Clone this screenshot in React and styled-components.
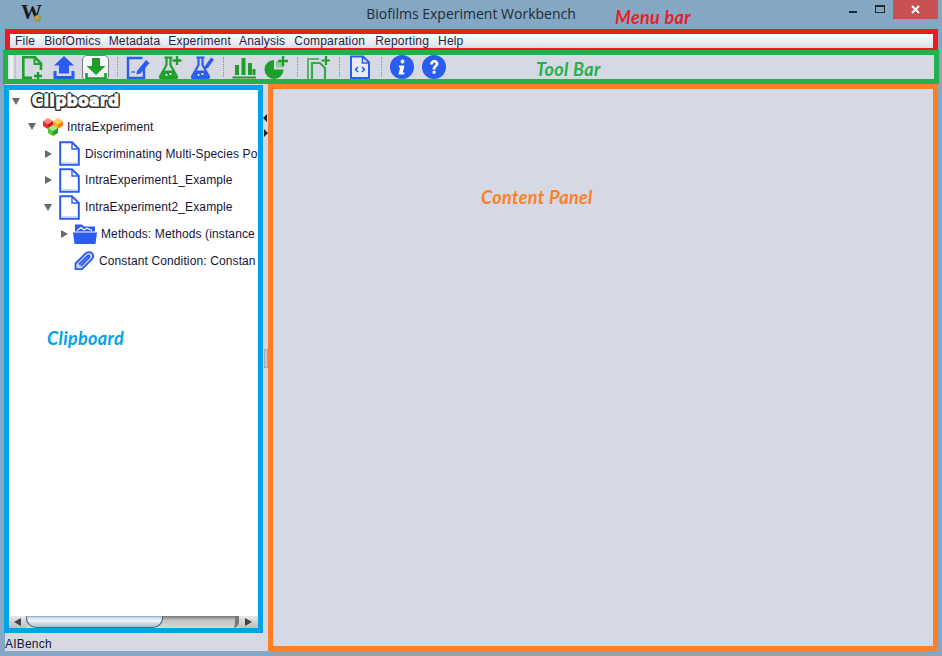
import React from 'react'
import styled, { createGlobalStyle } from 'styled-components'

const BLUE = '#2b5cf0'
const GREEN = '#1f9e2c'

const GlobalStyle = createGlobalStyle`
html, body {
  margin: 0;
  padding: 0;
  background: #84a8c3;
}
* {
  box-sizing: border-box;
}
`

const Window = styled.div`
position: relative;
width: 942px;
height: 656px;
display: flex;
flex-direction: column;
background: #84a8c3;
font-family: "Liberation Sans", Arial, sans-serif;
overflow: hidden;
`

const TitleBar = styled.div`
position: relative;
height: 29px;
flex: none;
display: flex;
justify-content: space-between;
align-items: flex-start;
padding: 0 4px 0 21px;
`

const AppLogo = styled.div`
position: relative;
width: 20px;
height: 20px;
margin-top: 2px;
font-family: "Liberation Serif", serif;
font-weight: bold;
font-size: 21px;
line-height: 20px;
color: #1c1c1c;
`

const LogoDot = styled.span`
position: absolute;
right: 0;
bottom: 0;
width: 7px;
height: 7px;
border-radius: 50%;
background: radial-gradient(circle at 40% 40%, #f0a040, #6f9a5a 75%);
`

const Title = styled.div`
position: absolute;
left: 0;
right: 0;
top: 5px;
text-align: center;
font-family: "Open Sans", sans-serif;
font-size: 14px;
line-height: 18px;
color: #1e2a36;
`

const WindowButtons = styled.div`
position: relative;
display: flex;
align-items: flex-start;
`

const MinButton = styled.div`
width: 8px;
height: 2px;
margin: 11px 18px 0 0;
background: #1f2a33;
`

const MaxButton = styled.div`
width: 10px;
height: 8px;
margin: 5px 8px 0 0;
border: 1px solid #1f2a33;
border-top-width: 2px;
`

const CloseButton = styled.div`
width: 45px;
height: 19px;
background: #c75050;
display: flex;
align-items: center;
justify-content: center;
`

const Frame = styled.div`
flex: 1;
min-height: 0;
margin: 0 4px 5px 5px;
display: flex;
flex-direction: column;
background: #d6d9e3;
`

const MenuBar = styled.div`
height: 21px;
flex: none;
display: flex;
align-items: center;
border: solid #ed1c24;
border-width: 5px 5px 2px 5px;
padding-left: 5px;
background: linear-gradient(#ffffff, #dcdee6);
`

const MenuItem = styled.span`
font-size: 12px;
line-height: 14px;
letter-spacing: 0.2px;
margin-right: ${props => props.gap}px;
color: #23234a;
`

const ToolBar = styled.div`
position: relative;
height: 34px;
flex: none;
margin: 0 -1px 0 -2px;
display: flex;
align-items: stretch;
border: 5px solid #22b14c;
overflow: hidden;
`

const Gripper = styled.div`
width: 8px;
background: linear-gradient(90deg, #d6d9e3, #f4f5f8 45%, #b9bdc9);
`

const ToolButton = styled.div`
width: 32px;
height: 24px;
display: flex;
justify-content: center;
`

const PressedButton = styled.div`
width: 27px;
height: 26px;
margin: 0 3px 0 2px;
display: flex;
justify-content: center;
border: 1px solid #7a7d88;
border-radius: 5px;
background: linear-gradient(#ffffff, #e9ebf0);
`

const ToolSep = styled.div`
width: 10px;
position: relative;
&::after {
  content: "";
  position: absolute;
  left: 5px;
  top: 2px;
  bottom: 2px;
  border-left: 1px dotted #8a8d98;
}
`

const Main = styled.div`
flex: 1;
min-height: 0;
display: flex;
`

const LeftColumn = styled.div`
width: 259px;
margin-left: -1px;
flex: none;
display: flex;
flex-direction: column;
`

const ClipboardPanel = styled.div`
position: relative;
flex: 1;
min-height: 0;
margin-top: 1px;
display: flex;
flex-direction: column;
border: 5px solid #00a2e8;
background: #ffffff;
`

const Tree = styled.div`
flex: 1;
min-height: 0;
overflow: hidden;
`

const HeadRow = styled.div`
height: 23.5px;
display: flex;
align-items: center;
padding-left: 3px;
`

const HeadText = styled.span`
margin: -2px 0 0 12px;
font-family: "DejaVu Sans", sans-serif;
font-weight: bold;
font-size: 15px;
letter-spacing: 0.7px;
color: #ffffff;
-webkit-text-stroke: 1px #ffffff;
text-shadow: 2px 0 0 #333, -2px 0 0 #333, 0 2px 0 #333, 0 -2px 0 #333, 1.5px 1.5px 0 #333, -1.5px 1.5px 0 #333, 1.5px -1.5px 0 #333, -1.5px -1.5px 0 #333;
`

const Row = styled.div`
height: 26.8px;
display: flex;
align-items: center;
padding-left: ${props => props.indent}px;
white-space: nowrap;
font-size: 12px;
letter-spacing: 0.12px;
color: #14143a;
`

const ArrowDown = styled.span`
flex: none;
width: 0;
height: 0;
border-style: solid;
border-width: 7px 4.5px 0 4.5px;
border-color: #6a6a6a transparent transparent transparent;
`

const ArrowRight = styled.span`
flex: none;
width: 0;
height: 0;
margin-left: 1px;
border-style: solid;
border-width: 4.5px 0 4.5px 7px;
border-color: transparent transparent transparent #6a6a6a;
`

const ArrowSlot = styled.span`
flex: none;
width: ${props => props.width}px;
display: flex;
`

const IconSlot = styled.span`
flex: none;
display: flex;
margin-right: ${props => props.gap}px;
`

const HScroll = styled.div`
height: 12px;
flex: none;
display: flex;
background: linear-gradient(#77777a, #c4c4c7 35%, #d8d8da);
`

const ScrollButton = styled.div`
width: ${props => props.width}px;
flex: none;
display: flex;
align-items: center;
justify-content: center;
background: linear-gradient(#e8e8ea, #bdbdc1);
`

const ArrowSmallLeft = styled.span`
width: 0;
height: 0;
border-style: solid;
border-width: 4px 7px 4px 0;
border-color: transparent #444 transparent transparent;
`

const ArrowSmallRight = styled.span`
width: 0;
height: 0;
border-style: solid;
border-width: 4px 0 4px 7px;
border-color: transparent transparent transparent #444;
`

const ScrollThumb = styled.div`
width: 137px;
flex: none;
border: 1px solid #4a6078;
border-top-color: #9fb2c4;
border-radius: 0 0 10px 10px;
background: linear-gradient(#c2d3e2, #eef4f9 35%, #a9bfd3);
`

const ScrollTrack = styled.div`
flex: 1;
border-right: 4px solid #77777a;
border-radius: 0 0 6px 0;
`

const StatusBar = styled.div`
height: 18px;
flex: none;
padding-left: 1px;
font-size: 12px;
letter-spacing: 0.2px;
line-height: 22px;
color: #14143a;
`

const Splitter = styled.div`
position: relative;
width: 5px;
flex: none;
display: flex;
flex-direction: column;
align-items: center;
padding-top: 265px;
`

const SplitHandle = styled.div`
width: 4px;
height: 19px;
border: 1px solid #a4a8b4;
background: #c3c7d1;
`

const SplitArrowLeft = styled.span`
position: absolute;
left: 0;
top: 30px;
width: 0;
height: 0;
border-style: solid;
border-width: 4px 4px 4px 0;
border-color: transparent #222 transparent transparent;
`

const SplitArrowRight = styled.span`
position: absolute;
left: 1px;
top: 45px;
width: 0;
height: 0;
border-style: solid;
border-width: 4px 0 4px 4px;
border-color: transparent transparent transparent #222;
`

const ContentPanel = styled.div`
position: relative;
flex: 1;
border: 5px solid #ff7f27;
background: #d6d9e3;
`

const Note = styled.div`
position: absolute;
font-family: Lato, sans-serif;
font-style: italic;
font-weight: bold;
font-size: 18px;
letter-spacing: 0.35px;
line-height: 22px;
white-space: nowrap;
color: ${props => props.color};
`

const MenuNote = styled(Note)`
left: 615px;
top: 6px;
`

const ToolNote = styled(Note)`
left: 528px;
top: 3px;
`

const ClipNote = styled(Note)`
left: 38px;
top: 237px;
`

const ContentNote = styled(Note)`
left: 208px;
top: 97px;
`

const Ico = ({ w = 24, h = 24, vb, children }) => (
  <svg width={w} height={h} viewBox={vb || `0 0 ${w} ${h}`} fill="none">{children}</svg>
)

const DocPlusIcon = () => (
  <Ico>
    <path d="M12 22.7H3.3V2.3H15L21 8.5V15" stroke={GREEN} strokeWidth="2.6" />
    <path d="M14.5 2.5V9H20.5" stroke={GREEN} strokeWidth="2" />
    <path d="M18 17V24M14 21H22" stroke={GREEN} strokeWidth="2.4" />
  </Ico>
)

const UploadIcon = () => (
  <Ico>
    <path d="M12 1L22 10.5H17V18.5H7V10.5H2Z" fill={BLUE} />
    <path d="M3 16V22.5H21V16" stroke={BLUE} strokeWidth="3" />
  </Ico>
)

const DownloadIcon = () => (
  <Ico>
    <path d="M8 2H16V10H21.5L12 19L2.5 10H8Z" fill={GREEN} />
    <path d="M2.5 17V22.5H21.5V17" stroke={GREEN} strokeWidth="2.6" />
  </Ico>
)

const DocEditIcon = () => (
  <Ico>
    <path d="M16.5 3H2V23H18V12" stroke={BLUE} strokeWidth="2.4" />
    <path d="M11 16L20 5L23.5 8L14.5 18.5L10.5 19.5Z" fill={BLUE} />
    <path d="M5.5 17H9" stroke={BLUE} strokeWidth="1.4" />
  </Ico>
)

const FlaskShape = ({ color }) => (
  <g>
    <path d="M6.5 2.5H14.5M8.5 3V10L2 21.5Q2 23.5 4 23.5H17Q19 23.5 19 21.5L12.5 10V3" stroke={color} strokeWidth="2.2" />
    <path d="M6 15.5H15L18.5 23H2.5Z" fill={color} />
    <circle cx="8.5" cy="20" r="1.1" fill="#ffffff" />
    <circle cx="12.5" cy="19" r="1.1" fill="#ffffff" />
  </g>
)

const FlaskPlusIcon = () => (
  <Ico>
    <FlaskShape color={GREEN} />
    <path d="M19 1V10M14.5 5.5H23.5" stroke={GREEN} strokeWidth="2.4" />
  </Ico>
)

const FlaskEditIcon = () => (
  <Ico>
    <FlaskShape color={BLUE} />
    <path d="M15 11L21 2.5L24 4.5L18 13L15 14Z" fill={BLUE} />
  </Ico>
)

const ChartIcon = () => (
  <Ico>
    <path d="M3 10H7V20H3ZM9.5 3H13.5V20H9.5ZM16 8H20V20H16ZM20.5 14H23.5V20H20.5Z" fill={GREEN} />
    <path d="M0.5 22.5H24" stroke={GREEN} strokeWidth="2" />
  </Ico>
)

const PieIcon = () => (
  <Ico>
    <path d="M10 5A9.5 9.5 0 1 0 19.5 14.5H10Z" fill={GREEN} />
    <path d="M12 6A8.5 8.5 0 0 1 20.5 12.5H12Z" fill="#8ec99a" />
    <path d="M19 1V11M14 6H24" stroke={GREEN} strokeWidth="2.4" />
  </Ico>
)

const DocsPlusIcon = () => (
  <Ico>
    <path d="M2 24V4H13" stroke="#58b566" strokeWidth="2" />
    <path d="M6 24V8H14L19 13V24" stroke="#3ca84c" strokeWidth="2.2" />
    <path d="M20 1V10M15.5 5.5H24" stroke={GREEN} strokeWidth="2.2" />
  </Ico>
)

const CodeDocIcon = () => (
  <Ico>
    <path d="M3 23V1.5H15L21 7.5V23Z" stroke={BLUE} strokeWidth="2" fill="#e8ebf5" />
    <path d="M14.5 2V8H21" stroke={BLUE} strokeWidth="1.6" />
    <path d="M10 12L7.5 14.5L10 17M14 12L16.5 14.5L14 17" stroke={BLUE} strokeWidth="1.5" />
  </Ico>
)

const CircleBadge = ({ children }) => (
  <svg width="24" height="24" viewBox="0 0 24 24">
    <circle cx="12" cy="12" r="12" fill={BLUE} />
    {children}
  </svg>
)

const InfoIcon = () => (
  <CircleBadge>
    <path d="M12.5 4.5a2 2 0 1 1 0 4a2 2 0 0 1 0-4ZM9 10.5H14.5L12.8 17.5H14.5L14 19.5H8.5L10.2 12.5H8.6Z" fill="#ffffff" />
  </CircleBadge>
)

const HelpIcon = () => (
  <CircleBadge>
    <path d="M8 9.5C8 6.5 10 5 12.2 5C14.6 5 16.5 6.5 16.5 8.8C16.5 11.6 13.4 11.8 13.4 14.5H10.6C10.6 10.8 13.4 10.6 13.4 8.9C13.4 8 12.9 7.5 12.1 7.5C11.2 7.5 10.9 8.2 10.8 9.5Z" fill="#ffffff" />
    <rect x="10.6" y="15.8" width="2.9" height="2.9" rx="0.6" fill="#ffffff" />
  </CircleBadge>
)

const CubesIcon = () => (
  <svg width="22" height="18" viewBox="0 0 22 18">
    <path d="M6 0L11 3L6 6L1 3Z" fill="#ff8a78" />
    <path d="M1 3L6 6V11L1 8Z" fill="#f02a30" />
    <path d="M11 3L6 6V11L11 8Z" fill="#c81820" />
    <path d="M16 0L21 3L16 6L11 3Z" fill="#ffd060" />
    <path d="M11 3L16 6V11L11 8Z" fill="#ffa820" />
    <path d="M21 3L16 6V11L21 8Z" fill="#e88a10" />
    <path d="M11 7L16 10L11 13L6 10Z" fill="#a0ec80" />
    <path d="M6 10L11 13V18L6 15Z" fill="#50c838" />
    <path d="M16 10L11 13V18L16 15Z" fill="#28a028" />
  </svg>
)

const TreeDocIcon = () => (
  <svg width="21" height="25" viewBox="0 0 21 25" fill="none">
    <path d="M1.2 23.8V1.2H13L19.8 8V23.8Z" fill="#ffffff" stroke={BLUE} strokeWidth="2" />
    <path d="M13 1.5V8H19.5" stroke={BLUE} strokeWidth="1.4" />
    <path d="M3 21.8H18" stroke="#b8c8fa" strokeWidth="1" />
  </svg>
)

const FolderIcon = () => (
  <svg width="24" height="20" viewBox="0 0 24 20">
    <path d="M2 7.5V0.5H9L11 2.5H22V7.5Z" fill={BLUE} />
    <path d="M4 6.5L8 3.5L11 6L14 4.2L19 6.5" fill="none" stroke="#ffffff" strokeWidth="1.2" />
    <path d="M0 8.5H24L22.5 20H1.5Z" fill={BLUE} />
  </svg>
)

const ClipIcon = () => (
  <svg width="20" height="19" viewBox="0 0 20 19" fill="none">
    <path d="M1.5 12.5L11.5 2.5C13.5 0.5 16.5 0.7 18 2.2C19.5 3.7 19.7 6.5 18 8.2L8 18.2H1.5Z" stroke={BLUE} strokeWidth="1.8" fill="#c8d6fb" />
    <path d="M5 13.5L13.5 5C14.8 3.8 16.4 5.2 15.2 6.5L6.8 15" stroke={BLUE} strokeWidth="1.8" />
  </svg>
)

const menus = [
  ['File', 9],
  ['BiofOmics', 8],
  ['Metadata', 8],
  ['Experiment', 8],
  ['Analysis', 9],
  ['Comparation', 10],
  ['Reporting', 9],
  ['Help', 0],
]

const Tool = ({ icon: Icon }) => (
  <ToolButton>
    <Icon />
  </ToolButton>
)

const App = () => {
  return (
    <Window>
      <GlobalStyle />
      <TitleBar>
        <AppLogo>
          W
          <LogoDot />
        </AppLogo>
        <Title>Biofilms Experiment Workbench</Title>
        <WindowButtons>
          <MinButton />
          <MaxButton />
          <CloseButton>
            <svg width="9" height="9" viewBox="0 0 9 9">
              <path d="M1 1L8 8M8 1L1 8" stroke="#ffffff" strokeWidth="2" />
            </svg>
          </CloseButton>
        </WindowButtons>
        <MenuNote color="#ed1c24">Menu bar</MenuNote>
      </TitleBar>
      <Frame>
        <MenuBar>
          {menus.map(([label, gap]) => (
            <MenuItem key={label} gap={gap}>{label}</MenuItem>
          ))}
        </MenuBar>
        <ToolBar>
          <Gripper />
          <Tool icon={DocPlusIcon} />
          <Tool icon={UploadIcon} />
          <PressedButton>
            <DownloadIcon />
          </PressedButton>
          <ToolSep />
          <Tool icon={DocEditIcon} />
          <Tool icon={FlaskPlusIcon} />
          <Tool icon={FlaskEditIcon} />
          <ToolSep />
          <Tool icon={ChartIcon} />
          <Tool icon={PieIcon} />
          <ToolSep />
          <Tool icon={DocsPlusIcon} />
          <ToolSep />
          <Tool icon={CodeDocIcon} />
          <ToolSep />
          <Tool icon={InfoIcon} />
          <Tool icon={HelpIcon} />
          <ToolNote color="#22b14c">Tool Bar</ToolNote>
        </ToolBar>
        <Main>
          <LeftColumn>
            <ClipboardPanel>
              <Tree>
                <HeadRow>
                  <ArrowDown />
                  <HeadText>Clipboard</HeadText>
                </HeadRow>
                <Row indent={19}>
                  <ArrowSlot width={14}><ArrowDown /></ArrowSlot>
                  <IconSlot gap={3}><CubesIcon /></IconSlot>
                  IntraExperiment
                </Row>
                <Row indent={35}>
                  <ArrowSlot width={15}><ArrowRight /></ArrowSlot>
                  <IconSlot gap={5}><TreeDocIcon /></IconSlot>
                  Discriminating Multi-Species Po
                </Row>
                <Row indent={35}>
                  <ArrowSlot width={15}><ArrowRight /></ArrowSlot>
                  <IconSlot gap={5}><TreeDocIcon /></IconSlot>
                  IntraExperiment1_Example
                </Row>
                <Row indent={35}>
                  <ArrowSlot width={15}><ArrowDown /></ArrowSlot>
                  <IconSlot gap={5}><TreeDocIcon /></IconSlot>
                  IntraExperiment2_Example
                </Row>
                <Row indent={51}>
                  <ArrowSlot width={13}><ArrowRight /></ArrowSlot>
                  <IconSlot gap={4}><FolderIcon /></IconSlot>
                  Methods: Methods (instance
                </Row>
                <Row indent={65}>
                  <IconSlot gap={5}><ClipIcon /></IconSlot>
                  Constant Condition: Constan
                </Row>
              </Tree>
              <HScroll>
                <ScrollButton width={17}><ArrowSmallLeft /></ScrollButton>
                <ScrollThumb />
                <ScrollTrack />
                <ScrollButton width={19}><ArrowSmallRight /></ScrollButton>
              </HScroll>
              <ClipNote color="#00a2e8">Clipboard</ClipNote>
            </ClipboardPanel>
            <StatusBar>AIBench</StatusBar>
          </LeftColumn>
          <Splitter>
            <SplitArrowLeft />
            <SplitArrowRight />
            <SplitHandle />
          </Splitter>
          <ContentPanel>
            <ContentNote color="#ff7f27">Content Panel</ContentNote>
          </ContentPanel>
        </Main>
      </Frame>
    </Window>
  )
}

export default App
